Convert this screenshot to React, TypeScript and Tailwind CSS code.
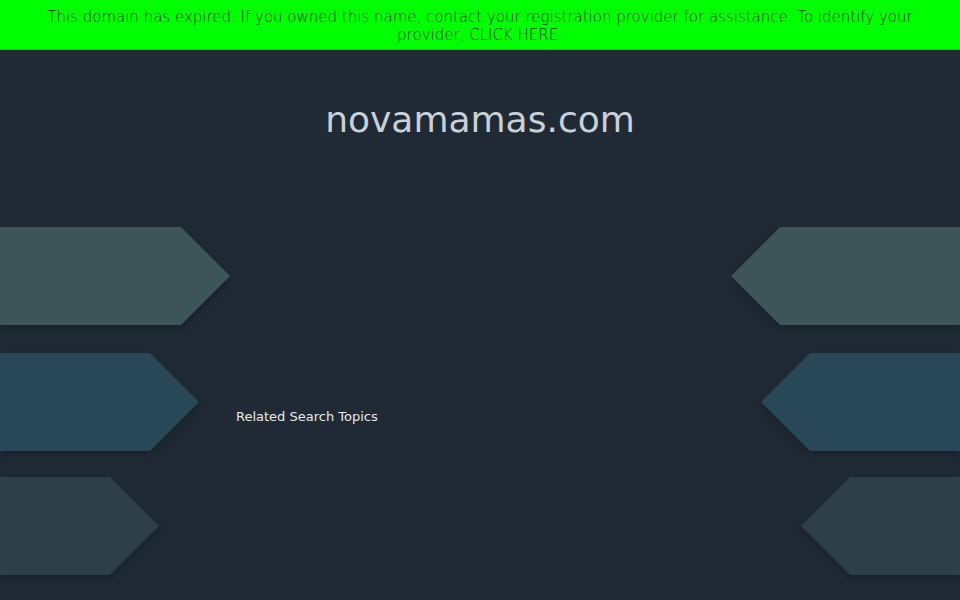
import React from "react";

type Shape = { depth: number; color: string };

const rows: { left: Shape; right: Shape }[] = [
  { left: { depth: 181, color: "#3d5458" }, right: { depth: 180, color: "#3d5458" } },
  { left: { depth: 150, color: "#284858" }, right: { depth: 150, color: "#284858" } },
  { left: { depth: 110, color: "#2d3f47" }, right: { depth: 110, color: "#2d3f47" } },
];

function Arrow({ width, color, dir }: { width: number; color: string; dir: "left" | "right" }) {
  const w = width + 49;
  const points =
    dir === "right"
      ? `0,0 ${width},0 ${w},49 ${width},98 0,98`
      : `0,49 49,0 ${w},0 ${w},98 49,98`;
  return (
    <svg width={w} height={98} viewBox={`0 0 ${w} 98`} className="block drop-shadow-[0_3px_4px_rgba(0,0,0,0.25)]">
      <polygon points={points} fill={color} />
    </svg>
  );
}

export default function App() {
  return (
    <div className="min-h-[600px] w-[960px] bg-[#1f2a35] font-['DejaVu_Sans',sans-serif] overflow-hidden">
      <div className="h-[50px] bg-[#00ff00] border-b border-[#3fb03f] px-[40px] pt-[8px] text-center text-[15px] leading-[18px] font-extralight text-[#1e3a1e]">
        This domain has expired. If you owned this name, contact your registration provider for assistance. To identify your provider, CLICK HERE.
      </div>

      <div className="pt-[50px] h-[177px] text-center text-[36px] leading-[40px] text-[#c9d0d7]">
        novamamas.com
      </div>

      <div className="flex justify-between">
        <div className="flex flex-col w-[236px]">
          {rows.map((r, i) => (
            <div key={i} className={i === 1 ? "mt-[28px]" : i === 2 ? "mt-[26px]" : ""}>
              <Arrow width={r.left.depth} color={r.left.color} dir="right" />
            </div>
          ))}
        </div>

        <div className="flex-1 pt-[182px]">
          <div className="text-[13px] leading-[16px] text-[#e6e9ec]">Related Search Topics</div>
        </div>

        <div className="flex flex-col items-end w-[240px]">
          {rows.map((r, i) => (
            <div key={i} className={i === 1 ? "mt-[28px]" : i === 2 ? "mt-[26px]" : ""}>
              <Arrow width={r.right.depth} color={r.right.color} dir="left" />
            </div>
          ))}
        </div>
      </div>
    </div>
  );
}
